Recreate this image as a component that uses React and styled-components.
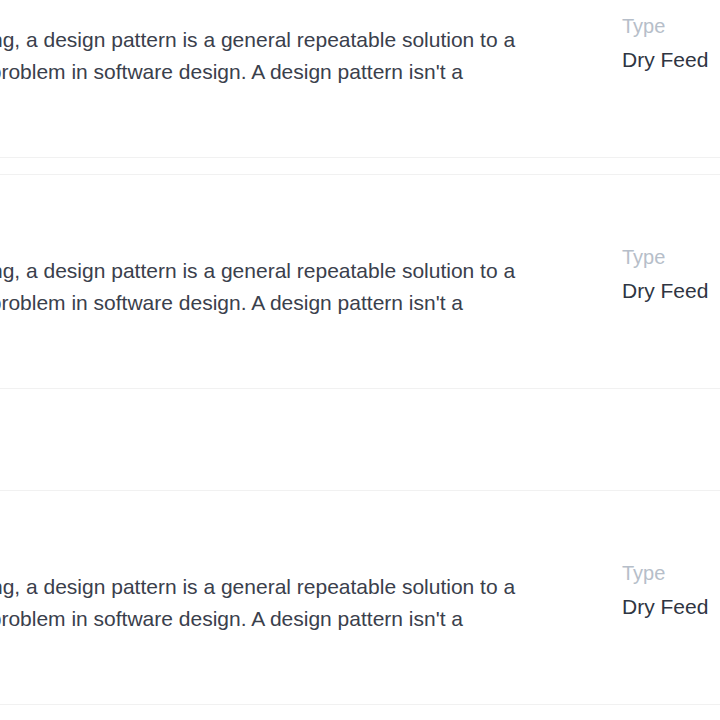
import React from "react";
import styled, { createGlobalStyle } from "styled-components";

const GlobalStyle = createGlobalStyle`
	html, body {
		margin: 0;
		padding: 0;
		background: #ffffff;
		overflow: hidden;
	}
	body {
		font-family: "Liberation Sans", Arial, sans-serif;
	}
`;

/*    **********************************************     */
const Viewport = styled.div`
	width: 720px;
	height: 720px;
	overflow: hidden;
`;

// the list is scrolled: part of the first card and the left side are out of view
const List = styled.div`
	display: flex;
	flex-direction: column;
	gap: 16px;
	margin-top: -57px;
	margin-left: -204px;
	width: 1000px;
`;

const Card = styled.div`
	box-sizing: border-box;
	height: 215px;
	display: flex;
	align-items: flex-start;
	border-top: 1px solid #f1f1f1;
	border-bottom: 1px solid #f1f1f1;
	background: #ffffff;
`;

const Spacer = styled.div`
	height: 69px;
`;

const Desc = styled.p`
	box-sizing: border-box;
	margin: 0;
	padding-top: 80px;
	width: 730px;
	flex-shrink: 0;
	font-size: 21px;
	line-height: 32px;
	color: #3a404c;
	max-height: 144px;
	overflow: hidden;
`;

const Meta = styled.div`
	display: flex;
	flex-direction: column;
	gap: 7px;
	padding-top: 70px;
	margin-left: 96px;
`;

const MetaLabel = styled.span`
	font-size: 20px;
	line-height: 24px;
	color: #b6bec9;
`;

const MetaValue = styled.span`
	font-size: 21px;
	line-height: 30px;
	color: #2f3542;
`;

const TEXT =
	"In software engineering, a design pattern is a general repeatable solution to a commonly occurring problem in software design. A design pattern isn't a finished design that can be transformed directly into code.";

const FeedCard = ({ type }) => (
	<Card>
		<Desc>{TEXT}</Desc>
		<Meta>
			<MetaLabel>Type</MetaLabel>
			<MetaValue>{type}</MetaValue>
		</Meta>
	</Card>
);

/*      ******************************************************   */
const App = () => {
	return (
		<Viewport>
			<GlobalStyle />
			<List>
				<FeedCard type="Dry Feed" />
				<FeedCard type="Dry Feed" />
				<Spacer />
				<FeedCard type="Dry Feed" />
			</List>
		</Viewport>
	);
};

export default App;
